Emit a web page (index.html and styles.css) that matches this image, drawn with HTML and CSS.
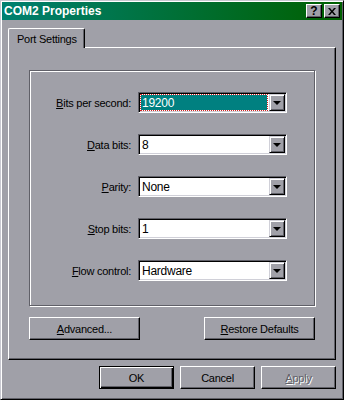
FILE: index.html
```html
<!DOCTYPE html>
<html lang="en">
<head>
<meta charset="UTF-8">
<title>COM2 Properties</title>
<link rel="stylesheet" href="styles.css">
</head>
<body>

<div class="window">
  <div class="titlebar">
    <span class="title">COM2 Properties</span>
    <div class="title-btns">
      <span class="tbtn help">?</span>
      <span class="tbtn">
        <svg width="8" height="7" viewBox="0 0 8 7"><path d="M0 0h2l2 2.5 2-2.5h2l-3 3.5 3 3.5h-2l-2-2.5-2 2.5h-2l3-3.5z" fill="#000"/></svg>
      </span>
    </div>
  </div>

  <div class="content">
    <div class="tabs">
      <div class="tab active">Port Settings</div>
    </div>

    <div class="panel">
      <div class="group">
        <label><u>B</u>its per second:</label>
        <div class="combo">
          <span class="value sel">19200</span>
          <span class="drop"><i class="arrow"></i></span>
        </div>

        <label><u>D</u>ata bits:</label>
        <div class="combo">
          <span class="value">8</span>
          <span class="drop"><i class="arrow"></i></span>
        </div>

        <label><u>P</u>arity:</label>
        <div class="combo">
          <span class="value">None</span>
          <span class="drop"><i class="arrow"></i></span>
        </div>

        <label><u>S</u>top bits:</label>
        <div class="combo">
          <span class="value">1</span>
          <span class="drop"><i class="arrow"></i></span>
        </div>

        <label><u>F</u>low control:</label>
        <div class="combo">
          <span class="value">Hardware</span>
          <span class="drop"><i class="arrow"></i></span>
        </div>
      </div>

      <div class="panel-btns">
        <button class="btn wide"><u>A</u>dvanced...</button>
        <button class="btn wide"><u>R</u>estore Defaults</button>
      </div>
    </div>

    <div class="dialog-btns">
      <button class="btn default">OK</button>
      <button class="btn">Cancel</button>
      <button class="btn" disabled><u>A</u>pply</button>
    </div>
  </div>
</div>

</body>
</html>
```

FILE: styles.css
```css
body {
  margin: 0;
  background: #a0a0a8;
  font-family: "Liberation Sans", Arial, sans-serif;
  font-size: 11px;
  letter-spacing: -0.25px;
  color: #000;
}
.window {
  width: 344px;
  height: 400px;
  box-sizing: border-box;
  padding: 1px;
  background: #a0a0a8;
  border: 1px solid;
  border-color: #c8c8d0 #000 #000 #c8c8d0;
  box-shadow: inset 1px 1px 0 #fff, inset -1px -1px 0 #606068;
}
.titlebar {
  height: 18px;
  display: flex;
  align-items: center;
  justify-content: space-between;
  padding-left: 2px;
  background: linear-gradient(to right, #008070, #006000);
}
.title {
  color: #fff;
  font-weight: bold;
  font-size: 12px;
  letter-spacing: 0;
}
.title-btns {
  display: flex;
  gap: 2px;
  margin-right: 2px;
}
.tbtn {
  width: 16px;
  height: 14px;
  box-sizing: border-box;
  display: flex;
  align-items: center;
  justify-content: center;
  background: #a0a0a8;
  border: 1px solid;
  border-color: #fff #000 #000 #fff;
  box-shadow: inset -1px -1px 0 #606068;
}
.tbtn.help {
  font-weight: bold;
  font-size: 12px;
  letter-spacing: 0;
  line-height: 12px;
}
.content {
  padding: 8px 6px 0 6px;
}
.tabs {
  display: flex;
  position: relative;
  z-index: 1;
  margin-bottom: -1px;
}
.tab {
  width: 77px;
  height: 20px;
  box-sizing: border-box;
  padding: 4px 0 0 8px;
  background: #a0a0a8;
  border-left: 1px solid #fff;
  border-top: 1px solid #fff;
  border-right: 1px solid #000;
  border-radius: 2px 2px 0 0;
  box-shadow: inset -1px 0 0 #606068;
}
.panel {
  height: 313px;
  box-sizing: border-box;
  border: 1px solid;
  border-color: #fff #000 #000 #fff;
  box-shadow: inset -1px -1px 0 #606068;
  padding: 22px 0 0 20px;
}
.group {
  width: 286px;
  height: 236px;
  box-sizing: border-box;
  border: 1px solid #606068;
  box-shadow: 1px 1px 0 #fff, inset 1px 1px 0 #fff;
  padding-top: 21px;
  display: grid;
  grid-template-columns: 101px 149px;
  grid-auto-rows: 21px;
  column-gap: 7px;
  row-gap: 21px;
  align-items: center;
}
.group label {
  text-align: right;
}
.combo {
  height: 21px;
  box-sizing: border-box;
  display: flex;
  background: #fff;
  border: 1px solid;
  border-color: #606068 #fff #fff #606068;
  box-shadow: inset 1px 1px 0 #000, inset -1px -1px 0 #d0d0d8;
  padding: 1px;
}
.value {
  flex: 1;
  display: flex;
  align-items: center;
  padding-left: 2px;
  margin-right: 1px;
  font-size: 12px;
}
.value.sel {
  color: #fff;
  border: 1px dotted #d02020;
  padding-left: 1px;
  background: linear-gradient(#008080, #008080) padding-box, #fff;
}
.drop {
  width: 16px;
  box-sizing: border-box;
  display: flex;
  align-items: center;
  justify-content: center;
  background: #a0a0a8;
  border: 1px solid;
  border-color: #d0d0d8 #000 #000 #d0d0d8;
  box-shadow: inset 1px 1px 0 #fff, inset -1px -1px 0 #606068;
}
.arrow {
  width: 0;
  height: 0;
  border-left: 4px solid transparent;
  border-right: 4px solid transparent;
  border-top: 4px solid #000;
}
.panel-btns {
  width: 286px;
  display: flex;
  justify-content: space-between;
  margin-top: 11px;
}
.btn {
  width: 75px;
  height: 23px;
  box-sizing: border-box;
  padding: 0;
  font-family: inherit;
  font-size: 11px;
  letter-spacing: -0.25px;
  color: #000;
  background: #a0a0a8;
  border: 1px solid;
  border-color: #fff #000 #000 #fff;
  box-shadow: inset -1px -1px 0 #606068;
}
.btn.wide {
  width: 111px;
}
.btn.default {
  border-color: #000;
  box-shadow: inset 1px 1px 0 #fff, inset -1px -1px 0 #000, inset -2px -2px 0 #606068;
}
.btn:disabled {
  color: #606068;
  text-shadow: 1px 1px 0 #fff;
}
.dialog-btns {
  display: flex;
  justify-content: flex-end;
  gap: 6px;
  margin-top: 6px;
}
```
